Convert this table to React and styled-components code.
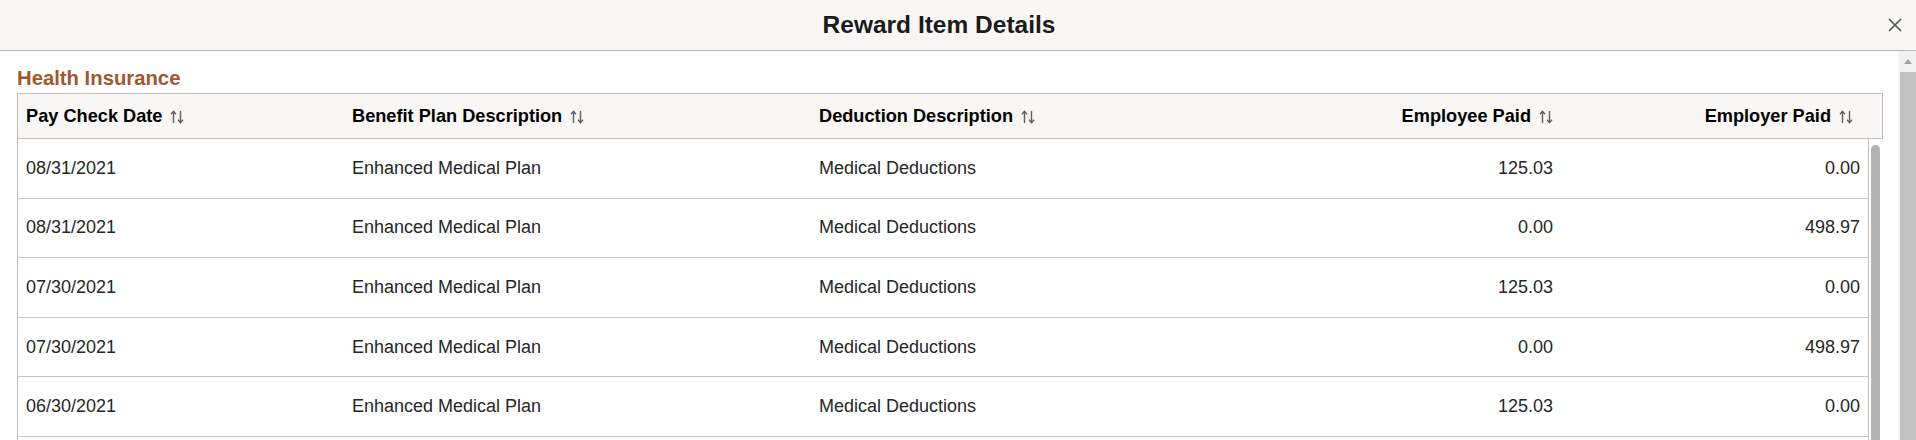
import React from "react";
import styled, { createGlobalStyle } from "styled-components";

const GlobalStyle = createGlobalStyle`
  html, body {
    margin: 0;
    padding: 0;
    overflow: hidden;
    background: #ffffff;
  }
  body {
    font-family: "Liberation Sans", Arial, sans-serif;
    color: #2a2a2a;
  }
  * { box-sizing: border-box; }
`;

const COLS = "326px 467px 439px 311px 307px";

const Dialog = styled.div`
  width: 1916px;
  height: 440px;
  display: flex;
  flex-direction: column;
  background: #fff;
`;

const TitleBar = styled.header`
  height: 51px;
  flex: none;
  display: flex;
  align-items: center;
  background: #f8f7f6;
  border-bottom: 1px solid #bdb8b3;
`;

const Title = styled.h1`
  flex: 1;
  margin: 0;
  text-align: center;
  font-size: 24.5px;
  line-height: 50px;
  font-weight: 700;
  color: #1b1b1b;
`;

const CloseButton = styled.button`
  width: 38px;
  height: 50px;
  padding: 0 0 0 10px;
  border: 0;
  background: transparent;
  display: flex;
  align-items: center;
  justify-content: flex-start;
  cursor: pointer;
`;

const DialogBody = styled.div`
  flex: 1;
  min-height: 0;
  display: flex;
`;

const Content = styled.main`
  flex: 1;
  min-width: 0;
  padding: 15px 0 0 17px;
  overflow: hidden;
`;

const SectionTitle = styled.h2`
  margin: 0 0 3px;
  font-size: 20.3px;
  line-height: 24px;
  font-weight: 700;
  color: #a0582f;
`;

const Grid = styled.div`
  width: 1866px;
`;

const HeaderRow = styled.div`
  display: grid;
  grid-template-columns: ${COLS} 14px;
  height: 46px;
  background: #f8f7f6;
  border: 1px solid #c4bfbb;
`;

const HeaderCell = styled.div`
  display: flex;
  align-items: center;
  gap: 8px;
  justify-content: ${(p) => (p.$num ? "flex-end" : "flex-start")};
  padding: 0 ${(p) => (p.$last ? 15 : 8)}px 0 8px;
  font-size: 18.2px;
  font-weight: 700;
  color: #000;
  white-space: nowrap;
`;

const SortIcon = styled.svg`
  width: 14px;
  height: 14px;
  flex: none;
  margin-top: 1px;
`;

const BodyWrap = styled.div`
  display: flex;
`;

const Rows = styled.div`
  width: 1852px;
  min-height: 320px;
  border-left: 1px solid #c4bfbb;
  border-right: 1px solid #c4bfbb;
`;

const Row = styled.div`
  display: grid;
  grid-template-columns: ${COLS};
  height: 59.6px;
  border-bottom: 1px solid #c8c4c0;
`;

const Cell = styled.div`
  display: flex;
  align-items: center;
  justify-content: ${(p) => (p.$num ? "flex-end" : "flex-start")};
  padding: 0 8px;
  font-size: 18px;
  color: #262626;
  white-space: nowrap;
`;

const Gutter = styled.div`
  width: 14px;
  flex: none;
  padding: 6px 0 0 2px;
`;

const GutterThumb = styled.div`
  width: 9px;
  height: 420px;
  border-radius: 5px 5px 0 0;
  background: #b3b3b3;
`;

const PageScrollbar = styled.div`
  width: 18px;
  flex: none;
  display: flex;
  flex-direction: column;
  background: #f1f1f1;
  border-left: 1px solid #f7f7f7;
`;

const ScrollButton = styled.div`
  height: 21px;
  display: flex;
  align-items: center;
  justify-content: center;
  padding-left: 1px;
`;

const PageThumb = styled.div`
  flex: 1;
  margin-left: 1px;
  background: #c1c1c1;
`;

const Sort = () => (
  <SortIcon viewBox="0 0 14 14" fill="none" stroke="#5e5e5e" strokeWidth="1.4">
    <path d="M3.5 13V1.6" />
    <path d="M1 4.2L3.5 1.4L6 4.2" />
    <path d="M10.5 1V12.4" />
    <path d="M8 9.8L10.5 12.6L13 9.8" />
  </SortIcon>
);

const columns = [
  { label: "Pay Check Date" },
  { label: "Benefit Plan Description" },
  { label: "Deduction Description" },
  { label: "Employee Paid", num: true },
  { label: "Employer Paid", num: true, last: true },
];

const rows = [
  ["08/31/2021", "125.03", "0.00"],
  ["08/31/2021", "0.00", "498.97"],
  ["07/30/2021", "125.03", "0.00"],
  ["07/30/2021", "0.00", "498.97"],
  ["06/30/2021", "125.03", "0.00"],
];

export default function App() {
  return (
    <>
      <GlobalStyle />
      <Dialog>
        <TitleBar>
          <Title>Reward Item Details</Title>
          <CloseButton aria-label="Close">
            <svg width="14" height="14" viewBox="0 0 14 14" stroke="#555" strokeWidth="1.7" fill="none">
              <path d="M1 1L13 13M13 1L1 13" />
            </svg>
          </CloseButton>
        </TitleBar>
        <DialogBody>
          <Content>
            <SectionTitle>Health Insurance</SectionTitle>
            <Grid>
              <HeaderRow>
                {columns.map((c) => (
                  <HeaderCell key={c.label} $num={c.num} $last={c.last}>
                    {c.label}
                    <Sort />
                  </HeaderCell>
                ))}
                <div />
              </HeaderRow>
              <BodyWrap>
                <Rows>
                  {rows.map((r, i) => (
                    <Row key={i}>
                      <Cell>{r[0]}</Cell>
                      <Cell>Enhanced Medical Plan</Cell>
                      <Cell>Medical Deductions</Cell>
                      <Cell $num>{r[1]}</Cell>
                      <Cell $num>{r[2]}</Cell>
                    </Row>
                  ))}
                </Rows>
                <Gutter>
                  <GutterThumb />
                </Gutter>
              </BodyWrap>
            </Grid>
          </Content>
          <PageScrollbar>
            <ScrollButton>
              <svg width="8" height="5" viewBox="0 0 8 5">
                <path d="M0 5L4 0L8 5Z" fill="#a3a3a3" />
              </svg>
            </ScrollButton>
            <PageThumb />
          </PageScrollbar>
        </DialogBody>
      </Dialog>
    </>
  );
}
